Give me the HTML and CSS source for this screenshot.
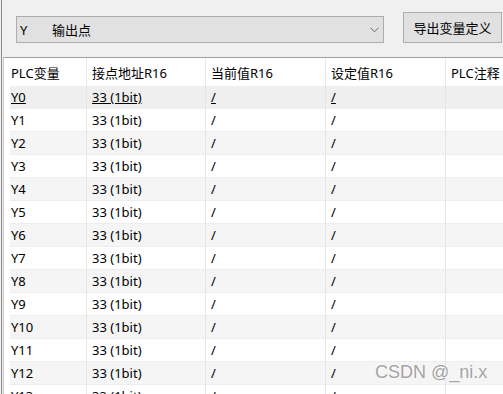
FILE: index.html
```html
<!DOCTYPE html>
<html>
<head>
<link rel="stylesheet" href="styles.css">
</head>
<body>
<div class="window">
    <div class="toolbar">
        <div class="combo">
            <span class="combo-key">Y</span>
            <span class="combo-label">输出点</span>
            <svg class="chevron" width="9" height="6" viewBox="0 0 9 6"><path d="M0.5 0.8 L4.5 4.8 L8.5 0.8" fill="none" stroke="#6a6a6a" stroke-width="1"/></svg>
        </div>
        <button class="btn">导出变量定义</button>
    </div>

    <div class="grid">
        <div class="row head">
            <div class="gap"></div>
            <div class="cell c1">PLC变量</div>
            <div class="cell c2">接点地址R16</div>
            <div class="cell c3">当前值R16</div>
            <div class="cell c4">设定值R16</div>
            <div class="cell c5">PLC注释</div>
        </div>
        <div id="rows"></div>
    </div>

    <div class="watermark">CSDN @_ni.x</div>
</div>

<script>
const rows = document.getElementById('rows');
for (let i = 0; i <= 13; i++) {
    const row = document.createElement('div');
    row.className = 'row' + (i === 0 ? ' current' : (i % 2 === 0 ? ' alt' : ''));
    row.innerHTML =
        '<div class="gap"></div>' +
        '<div class="cell c1">Y' + i + '</div>' +
        '<div class="cell c2">33 (1bit)</div>' +
        '<div class="cell c3">/</div>' +
        '<div class="cell c4">/</div>' +
        '<div class="cell c5"></div>';
    rows.appendChild(row);
}
</script>
</body>
</html>
```

FILE: styles.css
```css
* {
    margin: 0;
    padding: 0;
    box-sizing: border-box;
}

body {
    background: #f0f0f0;
    font-family: "Noto Sans", "Noto Sans CJK SC", sans-serif;
    font-size: 13px;
    color: #000;
    overflow: hidden;
}

.window {
    position: relative;
    height: 394px;
    border-left: 1px solid #8c8c8c;
    margin-left: 1px;
    overflow: hidden;
}

.toolbar {
    display: flex;
    align-items: flex-end;
    height: 57px;
    padding: 12px 0 14px 14px;
}

.combo {
    width: 368px;
    height: 27px;
    background: #e1e1e1;
    border: 1px solid #adadad;
    display: flex;
    align-items: center;
    padding-left: 3px;
}

.combo-key {
    width: 32px;
}

.combo-label {
    flex: 1;
}

.chevron {
    margin-right: 4px;
}

.btn {
    margin-left: 19px;
    width: 99px;
    height: 31px;
    background: #e1e1e1;
    border: 1px solid #adadad;
    font-family: "Noto Sans", "Noto Sans CJK SC", sans-serif;
    font-size: 13px;
    color: #000;
}

.grid {
    margin-left: 1px;
    background: #fff;
    border-top: 1px solid #a0a0a0;
    border-left: 1px solid #c8c8c8;
}

.row {
    display: flex;
    height: 23px;
    align-items: stretch;
}

.row.head {
    height: 28px;
}

.gap {
    width: 6px;
    background: #fff;
}

.cell {
    display: flex;
    align-items: center;
    white-space: nowrap;
    border-right: 1px solid #e6e6e6;
    border-bottom: 1px solid #ededed;
    padding-left: 5px;
}

.head .cell {
    border-bottom: none;
    border-right-color: #e8e8e8;
}

.c1 { width: 77px; padding-left: 1px; }
.c2 { width: 119px; }
.c3 { width: 120px; }
.c4 { width: 120px; }
.c5 { flex: 1; border-right: none; }

.row.current .cell {
    background: #efefef;
    text-decoration: underline;
}

.row.alt .cell {
    background: #f5f5f5;
}

.watermark {
    position: absolute;
    left: 373px;
    top: 362px;
    font-family: "Liberation Sans", Arial, sans-serif;
    font-size: 18px;
    color: #a3a3a3;
    text-shadow: 0 0 2px #fff, 0 0 1px #fff;
}
```
